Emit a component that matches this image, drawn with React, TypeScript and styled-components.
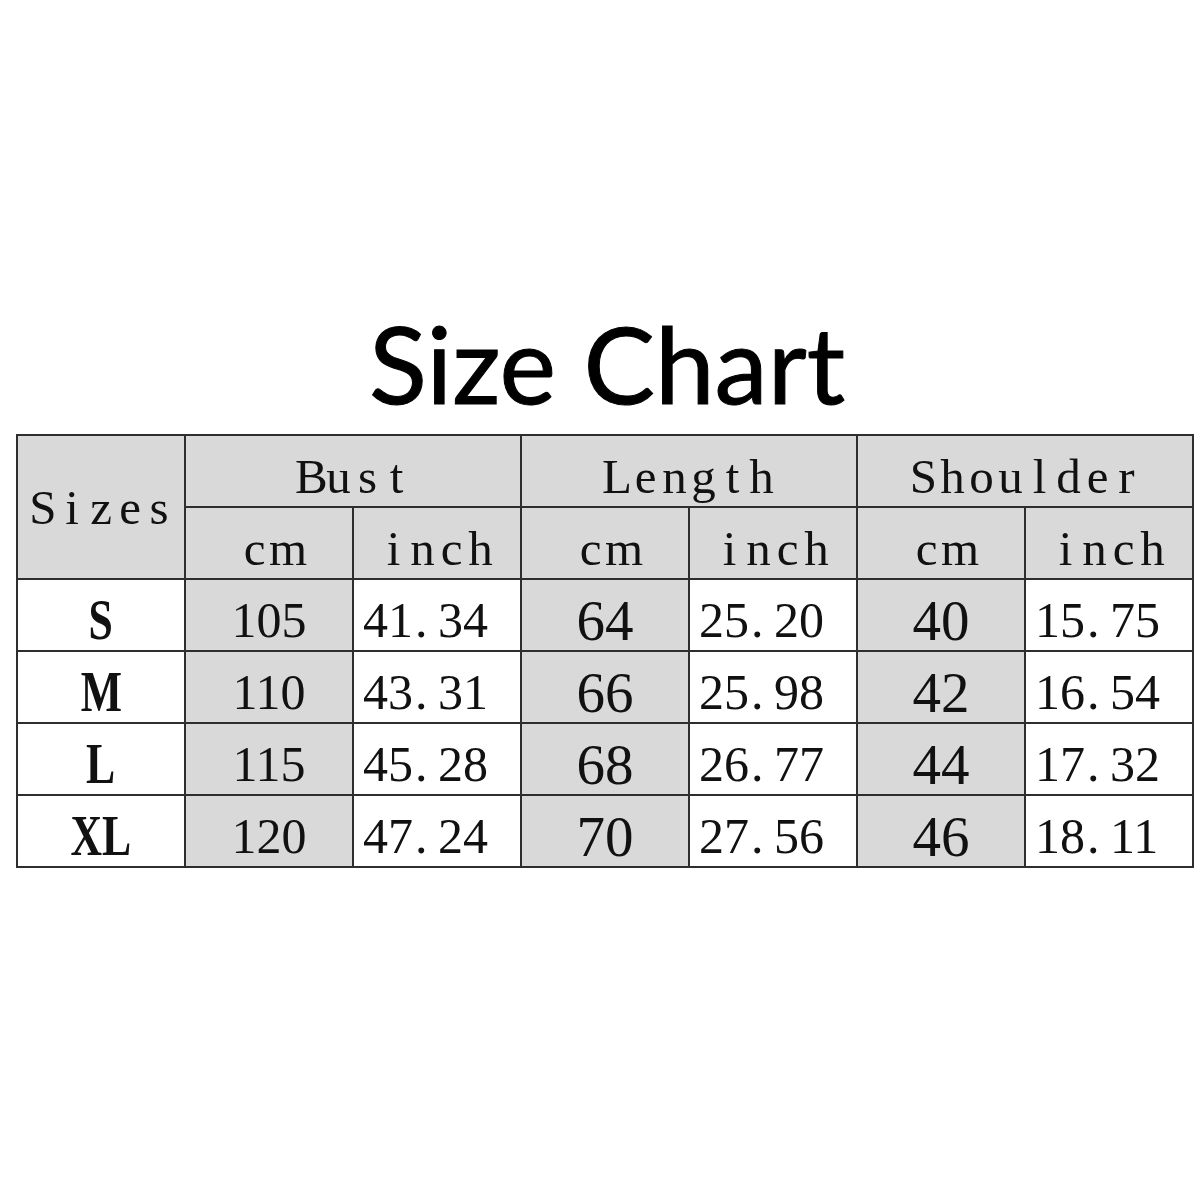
import React from 'react';
import styled, { createGlobalStyle } from 'styled-components';

const GlobalStyle = createGlobalStyle`
  html, body {
    margin: 0;
    padding: 0;
    background: #ffffff;
  }
`;

const Page = styled.div`
  width: 1200px;
  height: 1200px;
  padding-top: 309px;
  box-sizing: border-box;
  background: #ffffff;
`;

const Title = styled.h1`
  margin: 0 0 18px 0;
  font-family: Lato, "Open Sans", sans-serif;
  font-weight: 400;
  font-size: 107px;
  line-height: 1;
  text-align: center;
  color: #000;
  padding-left: 14px;
  -webkit-text-stroke: 1px #000;
`;

const Table = styled.table`
  margin-left: 16px;
  width: 1178px;
  table-layout: fixed;
  border-collapse: collapse;
  font-family: "Liberation Serif", "Times New Roman", serif;
  color: #111;
`;

const Cell = styled.td<{ $gray?: boolean; $align?: 'left' | 'center' }>`
  border: 2px solid #2e2e2e;
  height: 72px;
  padding: 10px 0 0 ${(p) => (p.$align === 'left' ? '9px' : '0')};
  box-sizing: border-box;
  background: ${(p) => (p.$gray ? '#d9d9d9' : '#ffffff')};
  text-align: ${(p) => p.$align || 'center'};
  vertical-align: middle;
  white-space: nowrap;
  line-height: 1;
`;

const HeadCell = styled(Cell).attrs({ as: 'th' })`
  font-weight: 400;
  font-size: 49px;
`;

const Slot = styled.span<{ $w: number }>`
  display: inline-block;
  width: ${(p) => p.$w}px;
  text-align: center;
`;

const Number = styled.span<{ $big?: boolean }>`
  font-size: ${(p) => (p.$big ? 57 : 50)}px;
`;

const Dot = styled.span`
  display: inline-block;
  width: 0.5em;
  text-align: left;
  padding-left: 0.04em;
  box-sizing: border-box;
`;

const SizeLabel = styled.span`
  display: inline-block;
  font-size: 56px;
  font-weight: 700;
  transform: scaleX(0.78);
`;

const Letters = ({ text, w = 29 }: { text: string; w?: number }) => (
  <>
    {text.split('').map((c, i) => (
      <Slot key={i} $w={w}>{c}</Slot>
    ))}
  </>
);

const Value = ({ text, big }: { text: string; big?: boolean }) => {
  const parts = text.split('.');
  return (
    <Number $big={big}>
      {parts[0]}
      {parts.length > 1 && (
        <>
          <Dot>.</Dot>
          {parts[1]}
        </>
      )}
    </Number>
  );
};

const rows = [
  { size: 'S', bust: ['105', '41.34'], length: ['64', '25.20'], shoulder: ['40', '15.75'] },
  { size: 'M', bust: ['110', '43.31'], length: ['66', '25.98'], shoulder: ['42', '16.54'] },
  { size: 'L', bust: ['115', '45.28'], length: ['68', '26.77'], shoulder: ['44', '17.32'] },
  { size: 'XL', bust: ['120', '47.24'], length: ['70', '27.56'], shoulder: ['46', '18.11'] },
];

const App = () => (
  <Page>
    <GlobalStyle />
    <Title>Size Chart</Title>
    <Table>
      <colgroup>
        {Array.from({ length: 7 }).map((_, i) => (
          <col key={i} style={{ width: 168 }} />
        ))}
      </colgroup>
      <thead>
        <tr>
          <HeadCell $gray rowSpan={2} style={{ paddingTop: 0 }}>
            <Letters text="Sizes" />
          </HeadCell>
          <HeadCell $gray colSpan={2}><Letters text="Bust" /></HeadCell>
          <HeadCell $gray colSpan={2}><Letters text="Length" /></HeadCell>
          <HeadCell $gray colSpan={2}><Letters text="Shoulder" /></HeadCell>
        </tr>
        <tr>
          {['cm', 'inch', 'cm', 'inch', 'cm', 'inch'].map((u, i) => (
            <HeadCell key={i} $gray><Letters text={u} /></HeadCell>
          ))}
        </tr>
      </thead>
      <tbody>
        {rows.map((r) => (
          <tr key={r.size}>
            <Cell><SizeLabel>{r.size}</SizeLabel></Cell>
            <Cell $gray><Value text={r.bust[0]} /></Cell>
            <Cell $align="left"><Value text={r.bust[1]} /></Cell>
            <Cell $gray><Value text={r.length[0]} big /></Cell>
            <Cell $align="left"><Value text={r.length[1]} /></Cell>
            <Cell $gray><Value text={r.shoulder[0]} big /></Cell>
            <Cell $align="left"><Value text={r.shoulder[1]} /></Cell>
          </tr>
        ))}
      </tbody>
    </Table>
  </Page>
);

export default App;
